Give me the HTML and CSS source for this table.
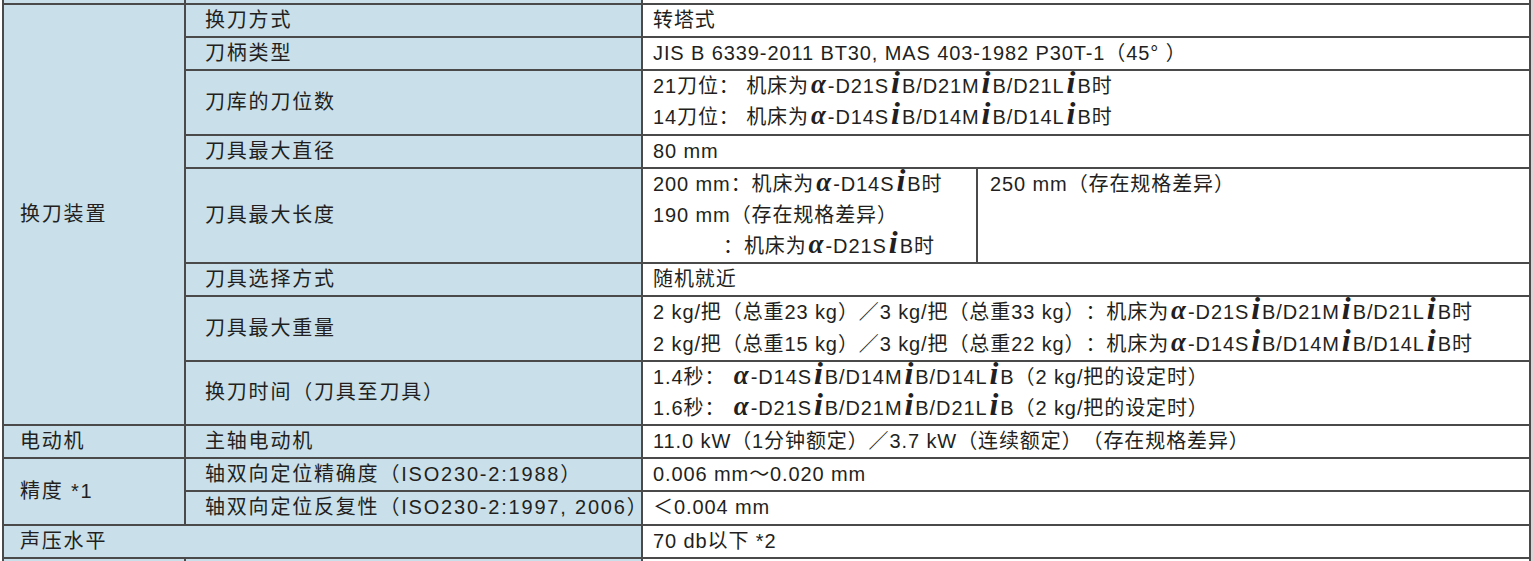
FILE: index.html
```html
<!DOCTYPE html>
<html lang="zh-CN">
<head>
<meta charset="utf-8">
<title>规格</title>
<link rel="stylesheet" href="styles.css">
</head>
<body>
<div class="page">
  <table class="spec">
    <colgroup>
      <col class="w1"><col class="w2"><col class="w3"><col class="w4">
    </colgroup>
    <tr class="ghost"><td class="h"></td><td class="h"></td><td colspan="2"></td></tr>
    <tr>
      <td class="h k1" rowspan="8">换刀装置</td>
      <td class="h k2">换刀方式</td>
      <td class="v" colspan="2">转塔式</td>
    </tr>
    <tr>
      <td class="h k2">刀柄类型</td>
      <td class="v" colspan="2">JIS B 6339-2011 BT30, MAS 403-1982 P30T-1（45° ）</td>
    </tr>
    <tr>
      <td class="h k2">刀库的刀位数</td>
      <td class="v" colspan="2">21刀位： 机床为<span class="al">α</span>-D21S<span class="fi">i</span>B/D21M<span class="fi">i</span>B/D21L<span class="fi">i</span>B时<br>14刀位： 机床为<span class="al">α</span>-D14S<span class="fi">i</span>B/D14M<span class="fi">i</span>B/D14L<span class="fi">i</span>B时</td>
    </tr>
    <tr>
      <td class="h k2">刀具最大直径</td>
      <td class="v" colspan="2">80 mm</td>
    </tr>
    <tr>
      <td class="h k2">刀具最大长度</td>
      <td class="v">200 mm：机床为<span class="al">α</span>-D14S<span class="fi">i</span>B时<br>190 mm（存在规格差异）<br><span class="indent">：机床为<span class="al">α</span>-D21S<span class="fi">i</span>B时</span></td>
      <td class="v v2">250 mm（存在规格差异）</td>
    </tr>
    <tr>
      <td class="h k2">刀具选择方式</td>
      <td class="v" colspan="2">随机就近</td>
    </tr>
    <tr>
      <td class="h k2">刀具最大重量</td>
      <td class="v" colspan="2">2 kg/把（总重23 kg）／3 kg/把（总重33 kg）：机床为<span class="al">α</span>-D21S<span class="fi">i</span>B/D21M<span class="fi">i</span>B/D21L<span class="fi">i</span>B时<br>2 kg/把（总重15 kg）／3 kg/把（总重22 kg）：机床为<span class="al">α</span>-D14S<span class="fi">i</span>B/D14M<span class="fi">i</span>B/D14L<span class="fi">i</span>B时</td>
    </tr>
    <tr>
      <td class="h k2">换刀时间（刀具至刀具）</td>
      <td class="v" colspan="2">1.4秒： <span class="al">α</span>-D14S<span class="fi">i</span>B/D14M<span class="fi">i</span>B/D14L<span class="fi">i</span>B（2 kg/把的设定时）<br>1.6秒： <span class="al">α</span>-D21S<span class="fi">i</span>B/D21M<span class="fi">i</span>B/D21L<span class="fi">i</span>B（2 kg/把的设定时）</td>
    </tr>
    <tr>
      <td class="h k1">电动机</td>
      <td class="h k2">主轴电动机</td>
      <td class="v" colspan="2">11.0 kW（1分钟额定）／3.7 kW（连续额定）（存在规格差异）</td>
    </tr>
    <tr>
      <td class="h k1" rowspan="2">精度 *1</td>
      <td class="h k2">轴双向定位精确度（ISO230-2:1988）</td>
      <td class="v" colspan="2">0.006 mm～0.020 mm</td>
    </tr>
    <tr>
      <td class="h k2">轴双向定位反复性（ISO230-2:1997, 2006）</td>
      <td class="v" colspan="2">＜0.004 mm</td>
    </tr>
    <tr>
      <td class="h k1" colspan="2">声压水平</td>
      <td class="v" colspan="2">70 db以下 *2</td>
    </tr>
    <tr class="ghost"><td class="h"></td><td class="h"></td><td colspan="2"></td></tr>
  </table>
  <div class="edge"></div>
</div>
</body>
</html>
```

FILE: styles.css
```css
html, body {
  margin: 0;
  padding: 0;
  background: #ffffff;
}

body {
  font-family: "Liberation Sans", "Noto Sans CJK SC", sans-serif;
  font-size: 20px;
  color: #231f20;
  overflow: hidden;
  height: 561px;
  text-spacing-trim: space-all;
}

.page {
  display: flex;
  align-items: stretch;
  margin-top: -30px;
  padding-left: 2px;
}

.spec {
  border-collapse: collapse;
  table-layout: fixed;
  width: 1527px;
  flex: none;
}

.w1 { width: 182px; }
.w2 { width: 457px; }
.w3 { width: 335px; }
.w4 { width: 553px; }

.spec td {
  border: 2px solid #4a4a4a;
  padding: 0;
  line-height: 31.15px;
  vertical-align: top;
  white-space: nowrap;
  letter-spacing: 0.9px;
}

.spec .h {
  background: #c9dfea;
  vertical-align: middle;
  letter-spacing: 1.8px;
}

.spec .k1 { padding-left: 16px; }
.spec .k2 { padding-left: 19px; }
.spec .v { padding-left: 10px; }
.spec .v2 { padding-left: 12px; }

.ghost td { height: 31px; }

.indent { padding-left: 70px; }

.al {
  font-family: "Liberation Serif", "DejaVu Serif", serif;
  font-weight: bold;
  font-style: italic;
  font-size: 27px;
  line-height: 0;
  letter-spacing: 0;
  padding: 0 2px 0 2px;
}

.fi {
  font-family: "Liberation Serif", "DejaVu Serif", serif;
  font-weight: bold;
  font-style: italic;
  font-size: 32px;
  line-height: 0;
  letter-spacing: 0;
  padding: 0 2px 0 2px;
}

.edge {
  flex: 1;
  background: #d6d6d6;
}
```
